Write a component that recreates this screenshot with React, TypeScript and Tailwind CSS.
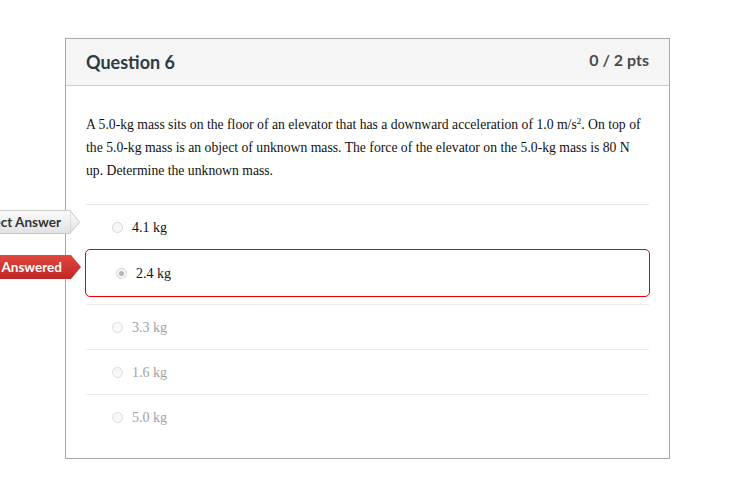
import React from "react";

type Answer = {
  label: string;
  picked?: boolean;
  correct?: boolean;
};

const answers: Answer[] = [
  { label: "4.1 kg", correct: true },
  { label: "2.4 kg", picked: true },
  { label: "3.3 kg" },
  { label: "1.6 kg" },
  { label: "5.0 kg" },
];

const Radio = ({ checked }: { checked?: boolean }) => (
  <span className="flex h-[11px] w-[11px] shrink-0 items-center justify-center rounded-full border border-[#d4d4d4] bg-[#f7f7f7]">
    {checked && <span className="h-[5px] w-[5px] rounded-full bg-[#b5b5b5]" />}
  </span>
);

const Flag = ({ text, tone }: { text: string; tone: "grey" | "red" }) => {
  const body =
    tone === "red"
      ? "bg-gradient-to-b from-[#e2473f] to-[#bf2624] text-white"
      : "bg-gradient-to-b from-[#fbfbfb] to-[#e2e2e2] text-[#333] border border-[#c9c9c9] border-r-0";
  return (
    <div
      className={`absolute right-full top-[5px] flex h-[24px] items-center font-['Lato',sans-serif] text-[13.5px] font-bold whitespace-nowrap ${
        tone === "red" ? "mr-[5px]" : "mr-[6px]"
      }`}
    >
      <div className={`flex h-full items-center pl-3 pr-[9px] ${body}`}>{text}</div>
      {tone === "red" ? (
        <svg width="10" height="24" viewBox="0 0 10 24" className="block">
          <defs>
            <linearGradient id="rg" x1="0" y1="0" x2="0" y2="1">
              <stop offset="0" stopColor="#e2473f" />
              <stop offset="1" stopColor="#bf2624" />
            </linearGradient>
          </defs>
          <polygon points="0,0 10,12 0,24" fill="url(#rg)" />
        </svg>
      ) : (
        <svg width="10" height="24" viewBox="0 0 10 24" className="block">
          <defs>
            <linearGradient id="gg" x1="0" y1="0" x2="0" y2="1">
              <stop offset="0" stopColor="#fbfbfb" />
              <stop offset="1" stopColor="#e2e2e2" />
            </linearGradient>
          </defs>
          <polygon points="0,0.5 9.5,12 0,23.5" fill="url(#gg)" stroke="#c9c9c9" strokeWidth="1" />
        </svg>
      )}
    </div>
  );
};

export default function App() {
  return (
    <div className="min-h-screen bg-white pl-[65px] pt-[38px]">
      <div className="w-[605px] border border-[#a8a8a8] bg-white">
        <div className="flex h-[47px] items-center justify-between border-b border-[#c7cdd1] bg-[#f5f5f5] px-5 font-['Lato',sans-serif] font-bold text-[#2d3b45]">
          <h2 className="mt-[1px] text-[18px]">Question 6</h2>
          <span className="mb-[4px] text-[16px] text-[#4a4a4a]">0 / 2 pts</span>
        </div>

        <div className="px-5 pb-[19px] pt-[27px]">
          <p className="pb-[22px] font-['Liberation_Serif',serif] text-[13.7px] leading-[23px] text-[#111]">
            A 5.0-kg mass sits on the floor of an elevator that has a downward acceleration of 1.0 m/s
            <span className="relative -top-[5px] text-[9px] leading-none">2</span>. On top of the 5.0-kg mass is
            an object of unknown mass. The force of the elevator on the 5.0-kg mass is 80 N up. Determine the
            unknown mass.
          </p>

          <div className="font-['Liberation_Serif',serif] text-[14px]">
            {answers.map((a) =>
              a.picked ? (
                <div
                  key={a.label}
                  className="relative mx-[-1px] mb-[7px] flex h-[48px] items-center gap-[9px] rounded-[5px] border border-[#ee0000] pl-[30px] text-[#111]"
                >
                  <Flag text="You Answered" tone="red" />
                  <Radio checked />
                  <span>{a.label}</span>
                </div>
              ) : (
                <div
                  key={a.label}
                  className={`relative flex h-[45px] items-center gap-[9px] border-t border-[#e6e6e6] pl-[26px] ${
                    a.correct ? "text-[#111]" : "text-[#8a8a8a] opacity-80"
                  }`}
                >
                  {a.correct && <Flag text="Correct Answer" tone="grey" />}
                  <Radio />
                  <span>{a.label}</span>
                </div>
              )
            )}
          </div>
        </div>
      </div>
    </div>
  );
}
